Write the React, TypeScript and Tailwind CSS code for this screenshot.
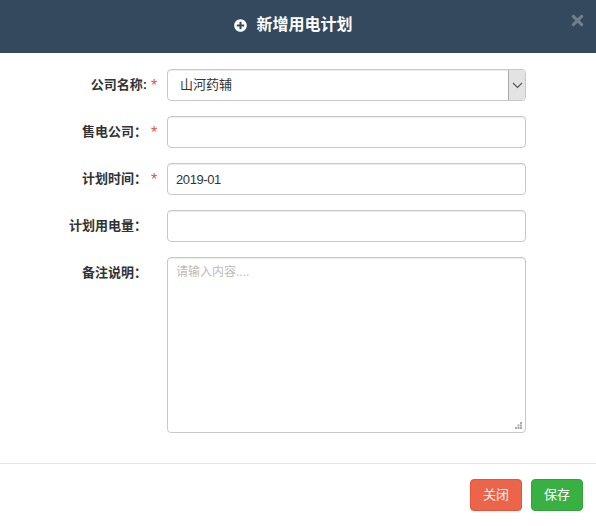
import React from 'react';
import { FaPlusCircle, FaTimes } from 'react-icons/fa';

const font = "font-['Liberation_Sans','Noto_Sans_CJK_SC',sans-serif]";
const boxClass =
  "w-[359px] h-8 px-2 rounded-[4px] border border-[#c8c8c8] bg-white text-[#333] outline-none shadow-[inset_0_1px_1px_rgba(0,0,0,0.075)] font-['Liberation_Sans','Noto_Sans_CJK_SC',sans-serif]";
const inputClass = `${boxClass} text-[13px]`;

interface FieldRowProps {
  label: string;
  required?: boolean;
  children: React.ReactNode;
}

const FieldRow: React.FC<FieldRowProps> = ({ label, required, children }) => (
  <div className="flex items-start">
    <label className="w-[147px] h-8 leading-[31px] text-right text-[13px] font-bold text-[#333] whitespace-nowrap">
      {label}
    </label>
    <span className="w-5 h-8 pl-1 leading-[33px] text-[16px] text-[#f0523f]">{required ? '*' : ''}</span>
    {children}
  </div>
);

export default function App() {
  return (
    <div className={`w-[596px] h-[526px] bg-white overflow-hidden flex flex-col ${font}`}>
      {/* Header */}
      <div className="relative h-[53px] bg-[#34495e] flex items-center justify-center gap-[9px] pr-[9px] pb-[3px] text-white shrink-0">
        <FaPlusCircle className="w-[13px] h-[13px]" />
        <h4 className="text-[16px] font-bold">新增用电计划</h4>
        <FaTimes className="absolute right-[11px] top-[12px] w-[15px] h-[17px] text-[#6f7f8f]" />
      </div>

      {/* Form */}
      <div className="flex flex-col gap-[15px] pt-4 h-[410px] shrink-0">
        <FieldRow label="公司名称:" required>
          <div className="w-[359px] h-8 rounded-[4px] border border-[#c8c8c8] flex items-stretch text-[13px] text-[#333] shadow-[inset_0_1px_1px_rgba(0,0,0,0.075)]">
            <span className="flex-1 pl-3 leading-[30px]">山河药辅</span>
            <span className="w-[17px] bg-[#e3e3e3] border-l border-[#a9a9a9] flex items-center justify-center rounded-r-[3px]">
              <svg width="11" height="7" viewBox="0 0 11 7" fill="none" stroke="#555" strokeWidth="1.1">
                <path d="M1 1l4.5 4.5L10 1" />
              </svg>
            </span>
          </div>
        </FieldRow>
        <FieldRow label="售电公司：" required>
          <input className={inputClass} />
        </FieldRow>
        <FieldRow label="计划时间：" required>
          <input className={`${inputClass} tracking-[-0.4px]`} defaultValue="2019-01" />
        </FieldRow>
        <FieldRow label="计划用电量：">
          <input className={inputClass} />
        </FieldRow>
        <FieldRow label="备注说明：">
          <div className="relative">
            <textarea
              className={`${boxClass} block h-[176px] py-[5px] resize-none text-[12px] placeholder:text-[#bbb]`}
              placeholder="请输入内容...."
            />
            <svg className="absolute right-[3px] bottom-[3px]" width="8" height="8" viewBox="0 0 8 8" fill="#a8a8a8">
              <rect x="5" y="0" width="2" height="2" />
              <rect x="2.5" y="2.5" width="2" height="2" />
              <rect x="5" y="2.5" width="2" height="2" />
              <rect x="0" y="5" width="2" height="2" />
              <rect x="2.5" y="5" width="2" height="2" />
              <rect x="5" y="5" width="2" height="2" />
            </svg>
          </div>
        </FieldRow>
      </div>

      {/* Footer */}
      <div className="border-t border-[#e5e5e5] flex justify-end gap-[9px] pt-[15px] pr-[13px]">
        <button className="w-[52px] h-8 rounded-[4px] bg-[#ec6449] border border-[#e8533a] text-white text-[13px]">关闭</button>
        <button className="w-[52px] h-8 rounded-[4px] bg-[#39b042] border border-[#34a03c] text-white text-[13px]">保存</button>
      </div>
    </div>
  );
}
